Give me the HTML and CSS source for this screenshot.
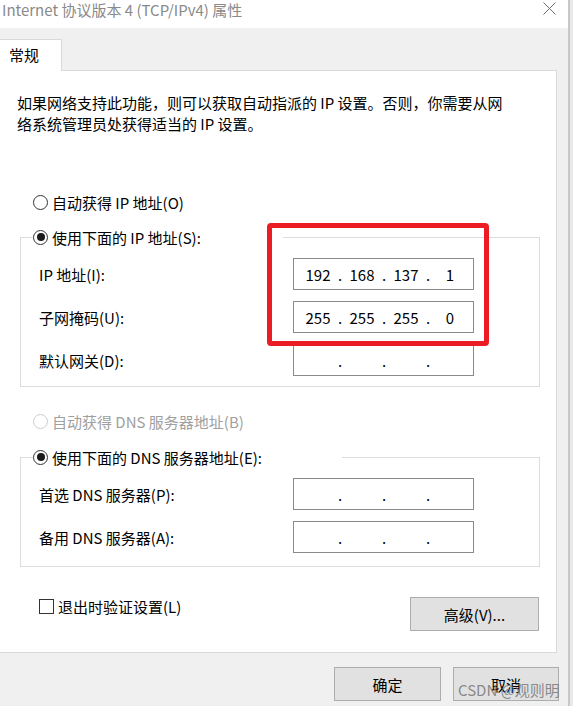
FILE: index.html
```html
<!DOCTYPE html>
<html>
<head>
    <meta charset="utf-8">
    <title>Internet 协议版本 4 (TCP/IPv4) 属性</title>
    <link rel="stylesheet" href="styles.css">
</head>
<body>
    <div class="window">
        <div class="titlebar">
            <span class="title">Internet 协议版本 4 (TCP/IPv4) 属性</span>
            <svg class="close" width="13" height="13" viewBox="0 0 13 13">
                <path d="M0.5 0.5 L12.5 12.5 M12.5 0.5 L0.5 12.5" stroke="#6e6e6e" stroke-width="1" fill="none"/>
            </svg>
        </div>

        <div class="tabs">
            <div class="tab">常规</div>
        </div>

        <div class="panel">
            <p class="intro">如果网络支持此功能，则可以获取自动指派的 IP 设置。否则，你需要从网<br>络系统管理员处获得适当的 IP 设置。</p>

            <label class="option first">
                <span class="radio"></span>自动获得 IP 地址(O)
            </label>

            <fieldset class="group group-ip">
                <legend class="option legend-ip">
                    <span class="radio checked"></span>使用下面的 IP 地址(S):
                </legend>
                <div class="fields">
                    <span class="label">IP 地址(I):</span>
                    <div class="ip">
                        <span class="oct">192</span><span class="dot">.</span>
                        <span class="oct">168</span><span class="dot">.</span>
                        <span class="oct">137</span><span class="dot">.</span>
                        <span class="oct">1</span>
                    </div>
                    <span class="label">子网掩码(U):</span>
                    <div class="ip">
                        <span class="oct">255</span><span class="dot">.</span>
                        <span class="oct">255</span><span class="dot">.</span>
                        <span class="oct">255</span><span class="dot">.</span>
                        <span class="oct">0</span>
                    </div>
                    <span class="label">默认网关(D):</span>
                    <div class="ip">
                        <span class="oct"></span><span class="dot">.</span>
                        <span class="oct"></span><span class="dot">.</span>
                        <span class="oct"></span><span class="dot">.</span>
                        <span class="oct"></span>
                    </div>
                </div>
            </fieldset>

            <label class="option disabled">
                <span class="radio"></span>自动获得 DNS 服务器地址(B)
            </label>

            <fieldset class="group group-dns">
                <legend class="option legend-dns">
                    <span class="radio checked"></span>使用下面的 DNS 服务器地址(E):
                </legend>
                <div class="fields">
                    <span class="label">首选 DNS 服务器(P):</span>
                    <div class="ip">
                        <span class="oct"></span><span class="dot">.</span>
                        <span class="oct"></span><span class="dot">.</span>
                        <span class="oct"></span><span class="dot">.</span>
                        <span class="oct"></span>
                    </div>
                    <span class="label">备用 DNS 服务器(A):</span>
                    <div class="ip">
                        <span class="oct"></span><span class="dot">.</span>
                        <span class="oct"></span><span class="dot">.</span>
                        <span class="oct"></span><span class="dot">.</span>
                        <span class="oct"></span>
                    </div>
                </div>
            </fieldset>

            <div class="panel-bottom">
                <label class="option check">
                    <span class="checkbox"></span>退出时验证设置(L)
                </label>
                <button class="btn btn-advanced">高级(V)...</button>
            </div>
        </div>

        <div class="footer">
            <button class="btn btn-ok">确定</button>
            <button class="btn btn-cancel">取消</button>
        </div>
    </div>
    <div class="edge"></div>

    <!-- annotation + watermark sit over the dialog -->
    <div class="highlight"></div>
    <div class="watermark">CSDN @观则明</div>
</body>
</html>
```

FILE: styles.css
```css
*, *:before, *:after {
    box-sizing: border-box;
}
html, body {
    margin: 0;
    padding: 0;
}
body {
    width: 573px;
    height: 706px;
    overflow: hidden;
    display: flex;
    position: relative;
    background: #f0f0f0;
    font-family: "Noto Sans CJK SC", sans-serif;
    font-size: 15px;
    color: #000;
}
.window {
    width: 568px;
    flex: none;
}
.edge {
    width: 5px;
    flex: none;
    border-left: 2px solid #c8c8c8;
    background: #e9e9e9;
}

/* title bar */
.titlebar {
    height: 28px;
    background: #fff;
    display: flex;
    justify-content: space-between;
    align-items: flex-start;
    padding: 0 12px 0 2px;
}
.title {
    color: #8a8a8a;
    line-height: 20px;
}
.close {
    margin-top: 2px;
}

/* tab strip */
.tabs {
    padding-top: 11px;
}
.tab {
    width: 62px;
    height: 32px;
    margin-bottom: -1px;
    position: relative;
    z-index: 1;
    background: #fff;
    border-top: 1px solid #d9d9d9;
    border-right: 1px solid #d9d9d9;
    padding-left: 9px;
    line-height: 30px;
}

.panel {
    width: 557px;
    background: #fff;
    border: 1px solid #dadada;
    border-left: none;
}
.intro {
    margin: 21px 0 0 17px;
    line-height: 21px;
    white-space: nowrap;
}

/* radio / checkbox rows */
.option {
    display: flex;
    align-items: center;
    height: 22px;
    white-space: nowrap;
}
.option.first {
    margin: 57px 0 0 33px;
}
.option.disabled {
    margin: 23px 0 0 33px;
    color: #a0a0a0;
}
.radio {
    width: 15px;
    height: 15px;
    border: 1px solid #333;
    border-radius: 50%;
    margin-right: 4px;
    display: flex;
    align-items: center;
    justify-content: center;
    background: #fff;
}
.radio.checked:after {
    content: '';
    width: 8px;
    height: 8px;
    border-radius: 50%;
    background: #1a1a1a;
}
.disabled .radio {
    border-color: #cdcdcd;
}
.checkbox {
    width: 15px;
    height: 15px;
    border: 1px solid #333;
    margin-right: 4px;
    background: #fff;
}

/* group boxes */
.group {
    margin: 13px 0 0 20px;
    width: 520px;
    padding: 0;
    border: 1px solid #dcdcdc;
    min-width: 0;
}
.group-dns {
    margin-top: 14px;
}
.group legend {
    padding: 0;
    margin-left: 12px;
}
.legend-ip {
    width: 250px;
}
.legend-dns {
    width: 309px;
}
.fields {
    display: grid;
    grid-template-columns: 254px 181px;
    row-gap: 11px;
    align-items: center;
    padding: 10px 0 10px 18px;
}
.group-dns .fields {
    padding-bottom: 13px;
}
.label {
    white-space: nowrap;
}
.ip {
    display: flex;
    align-items: center;
    height: 32px;
    border: 1px solid #8a8a8a;
    padding-left: 4px;
    background: #fff;
}
.oct {
    width: 40px;
    text-align: center;
}
.dot {
    width: 4px;
    text-align: center;
}

.panel-bottom {
    display: flex;
    justify-content: space-between;
    margin-top: 30px;
    padding: 0 17px 21px 39px;
}
.option.check {
    margin-top: -2px;
}

/* buttons */
.btn {
    height: 34px;
    background: #e1e1e1;
    border: 1px solid #adadad;
    font-family: inherit;
    font-size: 15px;
    color: #000;
    padding: 0;
}
.btn-advanced {
    width: 129px;
}
.footer {
    display: flex;
    justify-content: flex-end;
    gap: 12px;
    margin-top: 14px;
    padding-right: 9px;
}
.btn-ok {
    width: 107px;
}
.btn-cancel {
    width: 106px;
}

.highlight {
    position: absolute;
    left: 267px;
    top: 223px;
    width: 222px;
    height: 123px;
    border: 5px solid #ec1c24;
    border-radius: 4px;
}
.watermark {
    position: absolute;
    left: 458px;
    top: 680px;
    line-height: 20px;
    color: rgba(120, 120, 120, 0.85);
    white-space: nowrap;
}
```
